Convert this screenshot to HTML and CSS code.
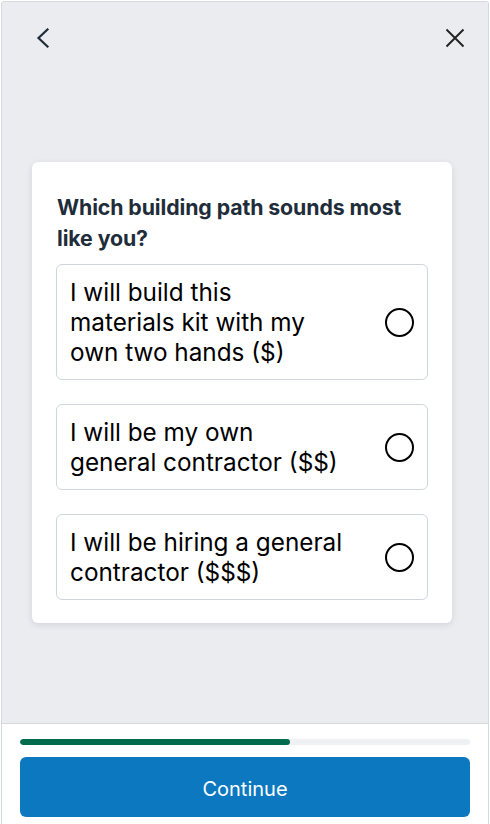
FILE: index.html
```html
<!DOCTYPE html>
<html lang="en">
<head>
<meta charset="utf-8">
<title>Building path</title>
<link rel="stylesheet" href="styles.css">
</head>
<body>
<div class="frame">
  <div class="main">
    <header class="nav">
      <button class="icon-btn back" aria-label="Back">
        <svg width="14" height="20" viewBox="0 0 14 20"><path d="M11.5 1.5 L2.5 10 L11.5 18.5" fill="none" stroke="#1f2d3a" stroke-width="2.2" stroke-linecap="square" stroke-linejoin="miter"/></svg>
      </button>
      <button class="icon-btn close" aria-label="Close">
        <svg width="20" height="20" viewBox="0 0 20 20"><path d="M1.5 1.5 L18.5 18.5 M18.5 1.5 L1.5 18.5" fill="none" stroke="#222" stroke-width="1.9"/></svg>
      </button>
    </header>
    <section class="card">
      <h1 class="question">Which building path sounds most like you?</h1>
      <div class="options">
        <label class="option">
          <span class="opt-text">I will build this<br>materials kit with my<br>own two hands ($)</span>
          <span class="radio"></span>
        </label>
        <label class="option">
          <span class="opt-text">I will be my own<br>general contractor ($$)</span>
          <span class="radio"></span>
        </label>
        <label class="option">
          <span class="opt-text">I will be hiring a general<br>contractor ($$$)</span>
          <span class="radio"></span>
        </label>
      </div>
    </section>
  </div>
  <footer class="footer">
    <div class="progress"><div class="progress-fill" style="width:60%"></div></div>
    <button class="continue">Continue</button>
  </footer>
</div>
</body>
</html>
```

FILE: styles.css
```css
* { box-sizing: border-box; }
html, body { margin: 0; padding: 0; background: #ffffff; }
body { padding: 1px 1px 0 1px; font-family: "Inter", "Liberation Sans", sans-serif; }

.frame {
  width: 488px;
  border: 1px solid #d3d9e2;
  border-bottom: none;
  border-radius: 3px 3px 0 0;
  display: flex;
  flex-direction: column;
}

.main {
  background: #ebecf0;
  height: 721px;
  display: flex;
  flex-direction: column;
}

.nav {
  display: flex;
  justify-content: space-between;
  align-items: flex-start;
  padding: 25px 23px 0 34px;
  height: 72px;
}

.icon-btn {
  background: none;
  border: none;
  padding: 0;
  margin: 0;
  display: block;
  line-height: 0;
}
.back { margin-top: 1px; }
.close { margin-top: 1px; }

.card {
  margin: 88px 0 0 30px;
  width: 420px;
  background: #ffffff;
  border-radius: 6px;
  box-shadow: 0 2px 6px rgba(30, 40, 60, 0.12);
  padding: 30px 24px 23px 24px;
}

.question {
  margin: 0 0 10px 1px;
  font-family: "Inter", "Liberation Sans", sans-serif;
  font-weight: 700;
  font-size: 21.3px;
  line-height: 31px;
  color: #1f2d3a;
  letter-spacing: -0.1px;
}

.options {
  display: flex;
  flex-direction: column;
  gap: 24px;
}

.option {
  display: flex;
  align-items: center;
  justify-content: space-between;
  border: 1px solid #d0d5dd;
  border-radius: 6px;
  padding: 12px 13px 12px 13px;
  background: #ffffff;
}

.opt-text {
  font-family: "Inter", "Liberation Sans", sans-serif;
  font-size: 24.3px;
  line-height: 30px;
  color: #000000;
}

.radio {
  width: 29px;
  height: 29px;
  border: 2.5px solid #000000;
  border-radius: 50%;
  flex: none;
}

.footer {
  background: #ffffff;
  border-top: 1px solid #d3d9e2;
  padding: 15px 18px 0 18px;
  height: 102px;
}

.progress {
  height: 6px;
  background: #f0f1f5;
  border-radius: 3px;
  overflow: hidden;
}
.progress-fill {
  height: 100%;
  background: #036b4d;
  border-radius: 3px;
}

.continue {
  display: block;
  width: 100%;
  height: 60px;
  margin-top: 12px;
  padding: 4px 0 0 0;
  border: none;
  border-radius: 6px;
  background: #0b78c0;
  color: #ffffff;
  font-family: "Inter", "Liberation Sans", sans-serif;
  font-size: 20px;
}
```
